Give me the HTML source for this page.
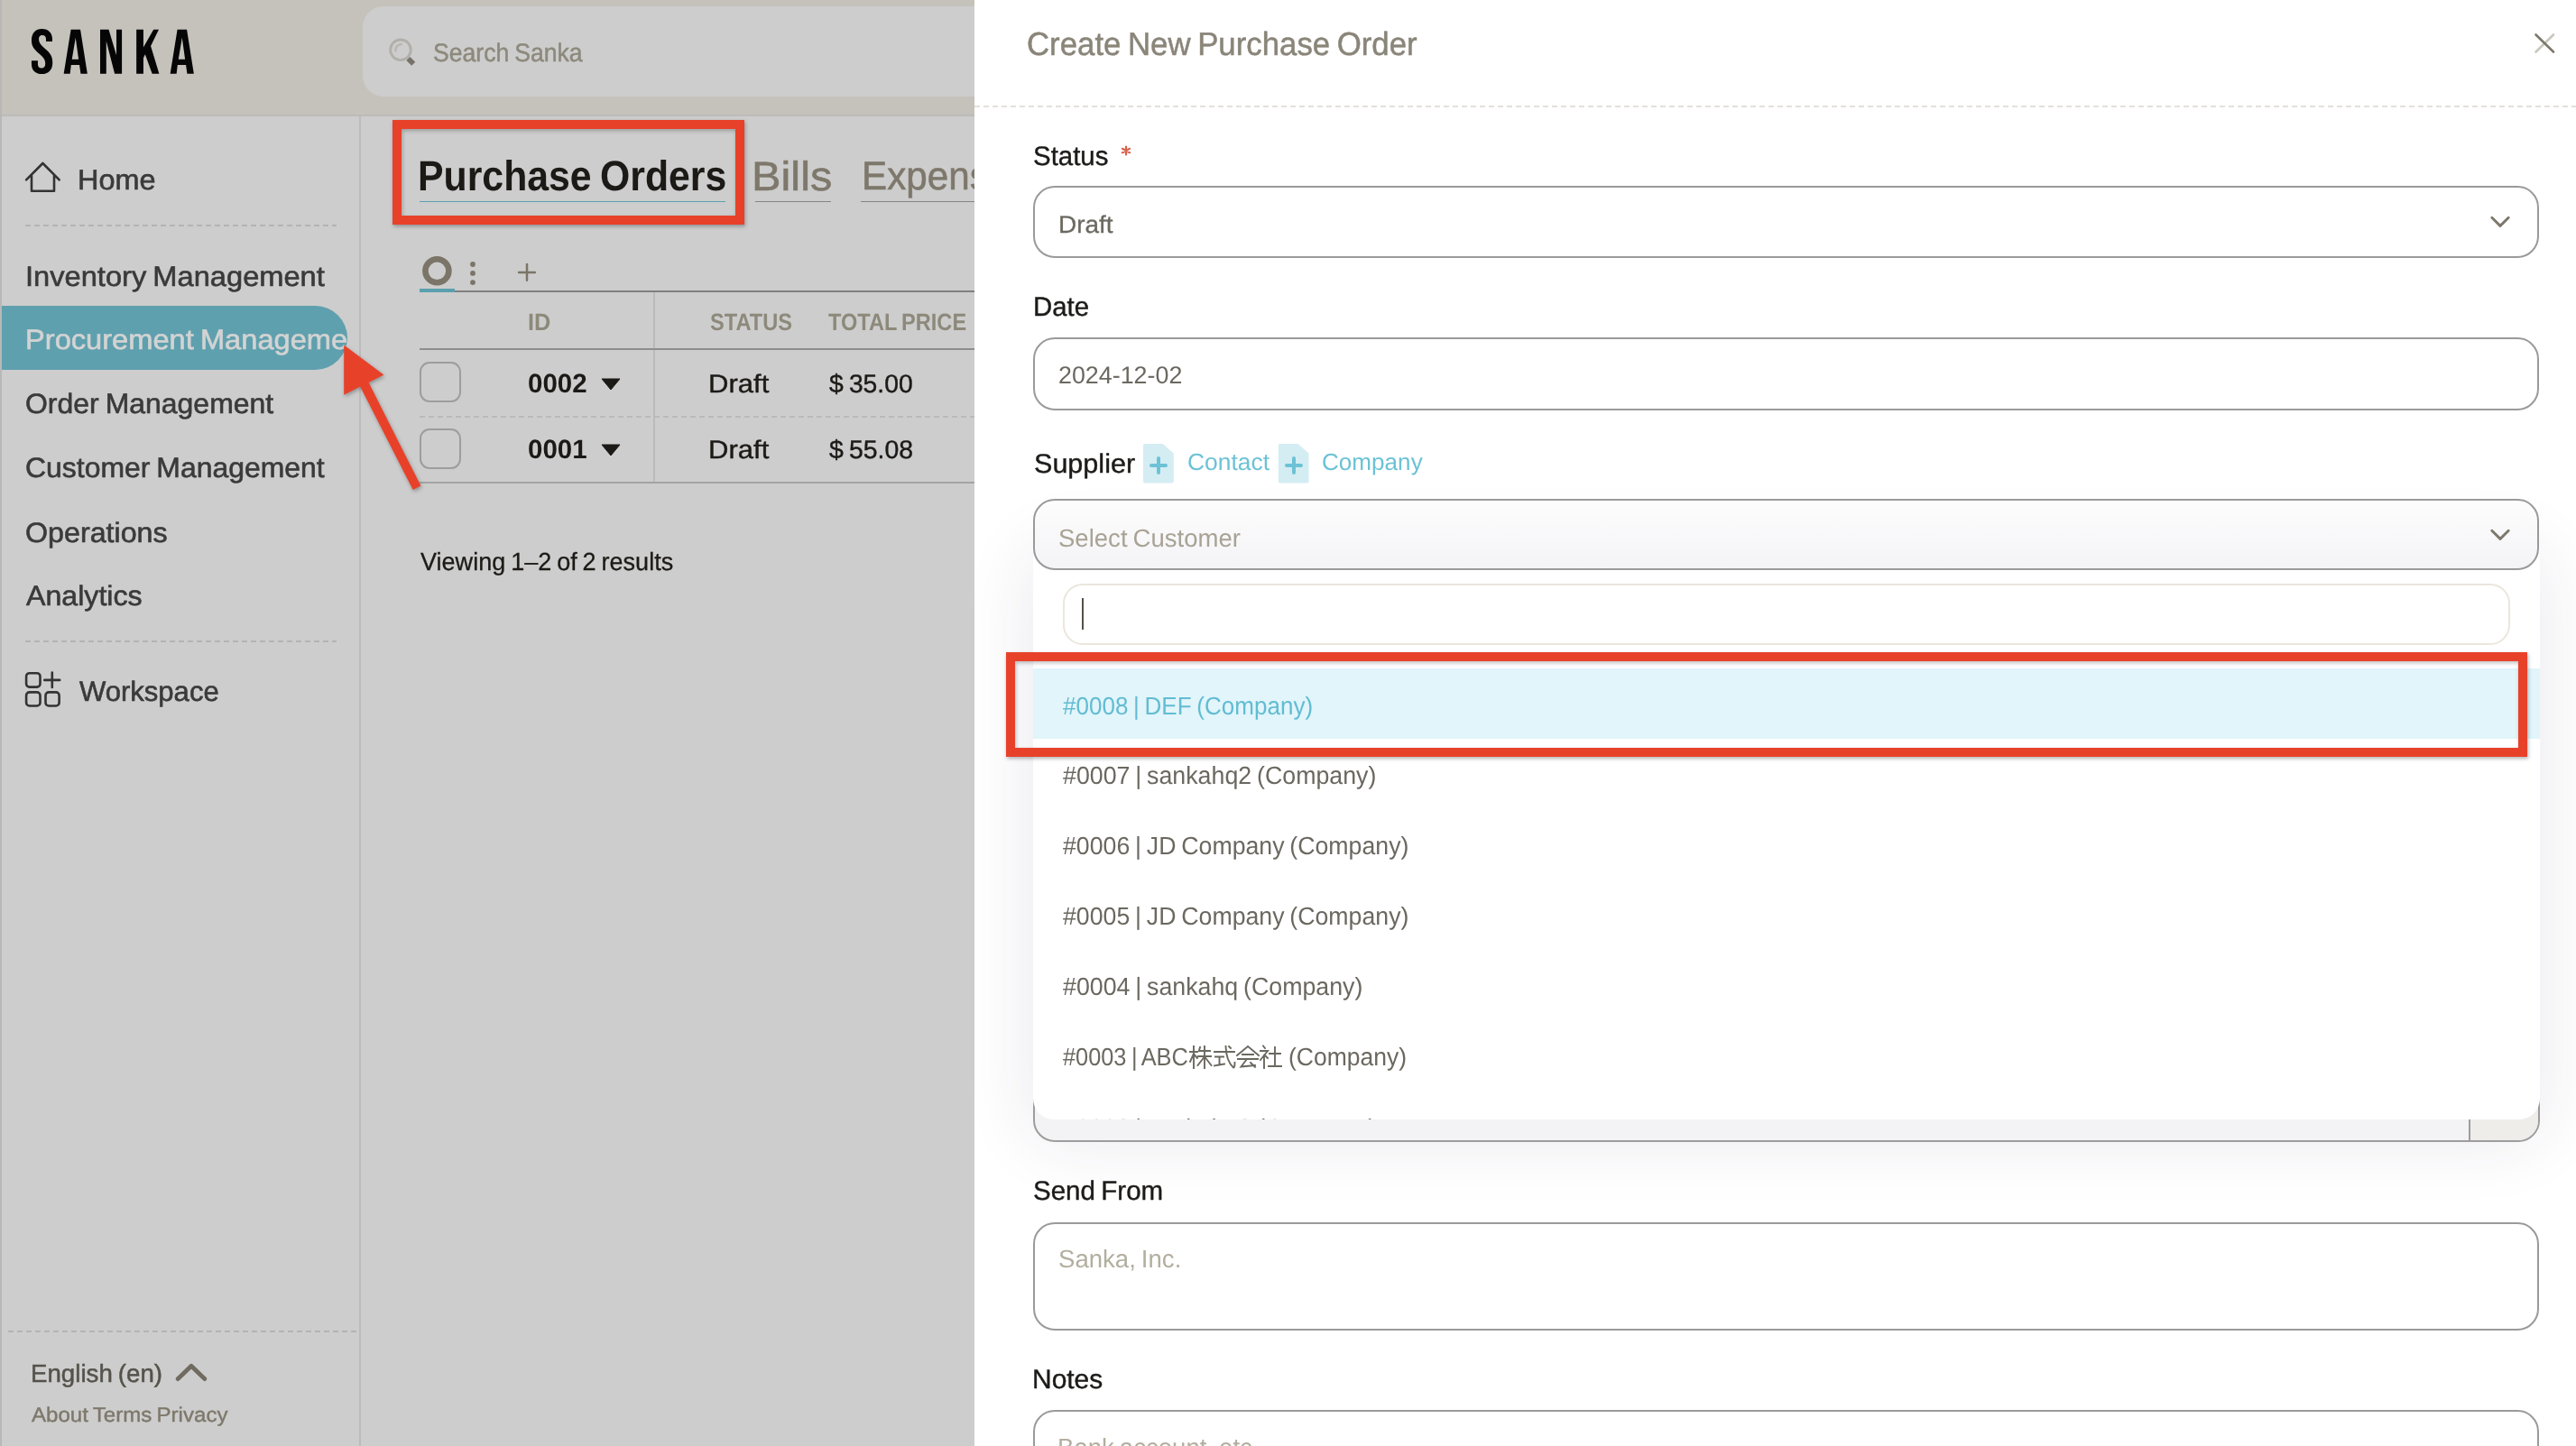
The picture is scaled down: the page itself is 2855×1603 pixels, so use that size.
<!DOCTYPE html>
<html><head><meta charset="utf-8"><title>Sanka - Create New Purchase Order</title>
<style>
html,body{margin:0;padding:0}
body{text-rendering:geometricPrecision;width:2855px;height:1603px;position:relative;overflow:hidden;background:#cdcdcd;font-family:"Liberation Sans",sans-serif}
.a{position:absolute;box-sizing:border-box}
.t{position:absolute;white-space:nowrap;transform-origin:0 0}
.dash{position:absolute;height:2px;background:repeating-linear-gradient(90deg,#b3b3b3 0 6px,transparent 6px 10px)}
</style></head><body>
<!-- ============ LEFT APP (dimmed by modal backdrop) ============ -->
<div class="a" style="left:0;top:0;width:1080px;height:127px;background:#c5c2bb"></div>
<div class="a" style="left:0;top:127px;width:1080px;height:2px;background:#bdbcba"></div>
<div class="a" style="left:0;top:0;width:2px;height:1603px;background:#b8b8b8"></div>
<!-- logo -->
<svg class="a" style="left:25px;top:20px" width="200" height="75" viewBox="0 0 2576 966">
<path fill="#060606" d="M128 320C128 210 190 155 275 155C370 155 425 215 425 300L425 335L335 335L335 300C335 265 315 245 280 245C248 245 232 268 232 300C232 345 255 380 300 420L350 465C410 520 428 570 428 640C428 740 370 800 275 800C180 800 128 740 128 660L128 610L218 610L218 660C218 695 238 715 272 715C305 715 325 695 325 650C325 600 305 570 262 530L210 485C150 430 128 385 128 320Z"/>
<path fill="#060606" fill-rule="evenodd" d="M588 795L690 165L825 165L925 795L830 795L812 670L693 670L678 795ZM705 588L800 588L757 280Z"/>
<path fill="#060606" d="M1108 165L1230 165L1340 530L1340 165L1418 165L1418 795L1315 795L1195 330L1195 795L1108 795Z"/>
<path fill="#060606" d="M1625 165L1725 165L1725 420L1870 165L1945 165L1830 400L1950 795L1850 795L1750 520L1725 570L1725 795L1625 795Z"/>
<path fill="#060606" fill-rule="evenodd" d="M2108 795L2210 165L2345 165L2445 795L2350 795L2332 670L2213 670L2198 795ZM2225 588L2320 588L2277 280Z"/>
</svg>
<!-- search -->
<div class="a" style="left:402px;top:7px;width:760px;height:100px;border-radius:23px;background:#cdcdcd"></div>
<svg class="a" style="left:420px;top:30px" width="60" height="55" viewBox="0 0 60 55">
<circle cx="24" cy="25.3" r="11.3" fill="none" stroke="#b2b0aa" stroke-width="2.9"/>
<path d="M18.4 26.4A6.5 6.5 0 0 1 24.8 19" fill="none" stroke="#b8b6b0" stroke-width="2.6" stroke-linecap="round"/>
<path d="M32.4 35L38.2 40.8" stroke="#77736a" stroke-width="5.8" stroke-linecap="butt"/>
</svg>
<!-- sidebar -->
<div class="a" style="left:398px;top:129px;width:2px;height:1474px;background:#bcbcbc"></div>
<svg class="a" style="left:20px;top:170px" width="60" height="55" viewBox="0 0 60 55">
<path d="M9.1 29.3L27.4 11L45.7 29.3M15 24.4V41.7H40V24.4" fill="none" stroke="#333" stroke-width="2.6" stroke-linecap="round" stroke-linejoin="round"/>
</svg>
<div class="dash" style="left:28px;top:249px;width:345px"></div>
<div class="a" style="left:2px;top:339px;width:383px;height:71px;background:#5fa0ae;border-radius:0 36px 36px 0;overflow:hidden"><span class="t" style="left:26.25px;top:22.33px;font-size:31.147px;line-height:31.147px;font-weight:400;color:#d3d3d3;word-spacing:-1.87px;transform:scaleX(1.0485);-webkit-text-stroke:0.6px #d3d3d3;">Procurement Management</span></div>
<div class="dash" style="left:28px;top:710px;width:345px"></div>
<svg class="a" style="left:20px;top:735px" width="60" height="60" viewBox="0 0 60 60">
<g fill="none" stroke="#333" stroke-width="2.6" stroke-linecap="round">
<rect x="9.1" y="11.2" width="15.4" height="15.4" rx="3.6"/>
<rect x="9.1" y="32.4" width="15.4" height="15.1" rx="3.6"/>
<rect x="30.5" y="32.4" width="15.1" height="15.1" rx="3.6"/>
<path d="M37.8 10.5V27M29.3 18.9H46.2"/>
</g></svg>
<div class="dash" style="left:9px;top:1475px;width:388px"></div>
<svg class="a" style="left:190px;top:1505px" width="45" height="30" viewBox="0 0 45 30">
<path d="M7.2 23.6L22 9.3L36.8 23.6" fill="none" stroke="#6f6b5f" stroke-width="4.8" stroke-linecap="round" stroke-linejoin="round"/>
</svg>
<!-- main -->
<div class="a" style="left:465px;top:222.6px;width:339px;height:1.5px;background:#5ba1b0"></div>
<div class="a" style="left:837px;top:222.6px;width:84px;height:1.5px;background:#848484"></div>
<div class="a" style="left:954px;top:222.6px;width:126px;height:1.5px;background:#848484"></div>
<svg class="a" style="left:455px;top:270px" width="150" height="60" viewBox="0 0 150 60">
<circle cx="29.4" cy="30.3" r="13" fill="none" stroke="#7a7568" stroke-width="6.6"/>
<circle cx="69" cy="23" r="2.9" fill="#7a7568"/><circle cx="69" cy="32.9" r="2.9" fill="#7a7568"/><circle cx="69" cy="43.1" r="2.9" fill="#7a7568"/>
<path d="M129 23V40.8M120.1 31.9H137.9" stroke="#7a7568" stroke-width="2.5" stroke-linecap="round"/>
</svg>
<div class="a" style="left:465px;top:320px;width:39px;height:4px;background:#5ba0ae"></div>
<div class="a" style="left:504px;top:322px;width:576px;height:2px;background:#808080"></div>
<div class="a" style="left:724px;top:324px;width:2px;height:212px;background:#bbbbbb"></div>
<div class="a" style="left:465px;top:386px;width:615px;height:2px;background:#8e8e8e"></div>
<div class="dash" style="left:465px;top:461px;width:615px;background:repeating-linear-gradient(90deg,#bababa 0 6px,transparent 6px 10px)"></div>
<div class="a" style="left:465px;top:534px;width:615px;height:2px;background:#a3a3a3"></div>
<div class="a" style="left:465px;top:401px;width:46px;height:45px;border:2px solid #9d9d9d;border-radius:11px"></div>
<div class="a" style="left:465px;top:475px;width:46px;height:45px;border:2px solid #9d9d9d;border-radius:11px"></div>
<svg class="a" style="left:660px;top:410px" width="40" height="110" viewBox="0 0 40 110">
<path d="M7 10H27L17 22Z M7 83H27L17 95Z" fill="#1c1a16" stroke="#1c1a16" stroke-width="1" stroke-linejoin="round"/>
</svg>
<span class="t" style="left:480.17px;top:45.22px;font-size:28.444px;line-height:28.444px;font-weight:400;color:#8d897c;word-spacing:-1.71px;transform:scaleX(0.9361);-webkit-text-stroke:0.5px #8d897c;">Search Sanka</span>
<span class="t" style="left:86.16px;top:184.39px;font-size:31.431px;line-height:31.431px;font-weight:400;color:#3a3a3a;word-spacing:-1.89px;transform:scaleX(1.0336);-webkit-text-stroke:0.6px #3a3a3a;">Home</span>
<span class="t" style="left:27.85px;top:291.33px;font-size:31.147px;line-height:31.147px;font-weight:400;color:#3a3a3a;word-spacing:-1.87px;transform:scaleX(1.0485);-webkit-text-stroke:0.6px #3a3a3a;">Inventory Management</span>
<span class="t" style="left:28.00px;top:432.33px;font-size:31.147px;line-height:31.147px;font-weight:400;color:#3a3a3a;word-spacing:-1.87px;transform:scaleX(1.0268);-webkit-text-stroke:0.6px #3a3a3a;">Order Management</span>
<span class="t" style="left:28.00px;top:503.33px;font-size:31.147px;line-height:31.147px;font-weight:400;color:#3a3a3a;word-spacing:-1.87px;transform:scaleX(1.0257);-webkit-text-stroke:0.6px #3a3a3a;">Customer Management</span>
<span class="t" style="left:28.29px;top:575.03px;font-size:31.147px;line-height:31.147px;font-weight:400;color:#3a3a3a;word-spacing:-1.87px;transform:scaleX(1.0352);-webkit-text-stroke:0.6px #3a3a3a;">Operations</span>
<span class="t" style="left:29.30px;top:644.73px;font-size:31.147px;line-height:31.147px;font-weight:400;color:#3a3a3a;word-spacing:-1.87px;transform:scaleX(1.0327);-webkit-text-stroke:0.6px #3a3a3a;">Analytics</span>
<span class="t" style="left:87.50px;top:751.03px;font-size:31.147px;line-height:31.147px;font-weight:400;color:#3a3a3a;word-spacing:-1.87px;transform:scaleX(0.9971);-webkit-text-stroke:0.6px #3a3a3a;">Workspace</span>
<span class="t" style="left:33.84px;top:1508.52px;font-size:27.733px;line-height:27.733px;font-weight:400;color:#55524b;word-spacing:-1.66px;transform:scaleX(0.9985);-webkit-text-stroke:0.5px #55524b;">English (en)</span>
<span class="t" style="left:35.00px;top:1556.73px;font-size:22.756px;line-height:22.756px;font-weight:400;color:#7d786b;word-spacing:-1.37px;transform:scaleX(1.0586);-webkit-text-stroke:0.4px #7d786b;">About Terms Privacy</span>
<span class="t" style="left:463.32px;top:171.76px;font-size:46.933px;line-height:46.933px;font-weight:700;color:#1c1a16;word-spacing:-2.82px;transform:scaleX(0.9120);">Purchase Orders</span>
<span class="t" style="left:833.19px;top:172.97px;font-size:45.511px;line-height:45.511px;font-weight:400;color:#7d786b;word-spacing:-2.73px;transform:scaleX(1.0705);-webkit-text-stroke:0.6px #7d786b;">Bills</span>
<span class="t" style="left:954.70px;top:174.17px;font-size:44.089px;line-height:44.089px;font-weight:400;color:#7d786b;word-spacing:-2.65px;transform:scaleX(0.9573);-webkit-text-stroke:0.6px #7d786b;">Expenses</span>
<span class="t" style="left:585.31px;top:344.10px;font-size:26.453px;line-height:26.453px;font-weight:700;color:#8d897b;word-spacing:-1.59px;transform:scaleX(0.9589);">ID</span>
<span class="t" style="left:786.63px;top:344.10px;font-size:26.453px;line-height:26.453px;font-weight:700;color:#8d897b;word-spacing:-1.59px;transform:scaleX(0.8931);">STATUS</span>
<span class="t" style="left:918.00px;top:344.10px;font-size:26.453px;line-height:26.453px;font-weight:700;color:#8d897b;word-spacing:-1.59px;transform:scaleX(0.8915);">TOTAL PRICE</span>
<span class="t" style="left:585.08px;top:411.15px;font-size:29.582px;line-height:29.582px;font-weight:700;color:#1c1a16;word-spacing:-1.77px;transform:scaleX(0.9977);">0002</span>
<span class="t" style="left:784.57px;top:411.92px;font-size:28.444px;line-height:28.444px;font-weight:400;color:#1c1a16;word-spacing:-1.71px;transform:scaleX(1.0922);-webkit-text-stroke:0.4px #1c1a16;">Draft</span>
<span class="t" style="left:919.00px;top:411.92px;font-size:28.444px;line-height:28.444px;font-weight:400;color:#1c1a16;word-spacing:-1.71px;transform:scaleX(0.9947);-webkit-text-stroke:0.4px #1c1a16;">$ 35.00</span>
<span class="t" style="left:585.08px;top:484.15px;font-size:29.582px;line-height:29.582px;font-weight:700;color:#1c1a16;word-spacing:-1.77px;transform:scaleX(0.9977);">0001</span>
<span class="t" style="left:784.57px;top:484.92px;font-size:28.444px;line-height:28.444px;font-weight:400;color:#1c1a16;word-spacing:-1.71px;transform:scaleX(1.0922);-webkit-text-stroke:0.4px #1c1a16;">Draft</span>
<span class="t" style="left:919.00px;top:484.92px;font-size:28.444px;line-height:28.444px;font-weight:400;color:#1c1a16;word-spacing:-1.71px;transform:scaleX(0.9995);-webkit-text-stroke:0.4px #1c1a16;">$ 55.08</span>
<span class="t" style="left:465.50px;top:608.52px;font-size:27.733px;line-height:27.733px;font-weight:400;color:#1c1a16;word-spacing:-1.66px;transform:scaleX(0.9758);-webkit-text-stroke:0.3px #1c1a16;">Viewing 1–2 of 2 results</span>
<!-- ============ MODAL ============ -->
<div class="a" style="left:1080px;top:0;width:1775px;height:1603px;background:#fff"></div>
<div class="a" style="left:1080px;top:117px;width:1775px;height:2px;background:repeating-linear-gradient(90deg,#e3e0d8 0 6px,transparent 6px 10px)"></div>
<svg class="a" style="left:2800px;top:30px" width="40" height="40" viewBox="0 0 40 40">
<path d="M30 8.5L10.5 27.5" stroke="#cac7be" stroke-width="2.6" stroke-linecap="round"/>
<path d="M10.5 8.5L30 27.5" stroke="#7d786b" stroke-width="2.6" stroke-linecap="round"/>
</svg>
<svg class="a" style="left:1236px;top:155px" width="24" height="24" viewBox="0 0 24 24">
<path d="M12 7.5V16.5M7.9 9.8L16.1 14.2M16.1 9.8L7.9 14.2" stroke="#d9624a" stroke-width="2.2" stroke-linecap="round"/>
</svg>
<!-- status select -->
<div class="a" style="left:1145px;top:206px;width:1669px;height:80px;border:2px solid #9a9a9a;border-radius:24px"></div>
<svg class="a" style="left:2750px;top:230px" width="40" height="30" viewBox="0 0 40 30">
<path d="M11.8 11.2L21 20.4L30.2 11.2" fill="none" stroke="#7d786b" stroke-width="2.9" stroke-linecap="round" stroke-linejoin="round"/>
</svg>
<!-- date -->
<div class="a" style="left:1145px;top:374px;width:1669px;height:81px;border:2px solid #9a9a9a;border-radius:24px"></div>
<!-- supplier badges -->
<svg class="a" style="left:1260px;top:485px" width="200" height="60" viewBox="0 0 200 60">
<path d="M7 9Q7 7 9 7L28.7 7L40.8 17.5L40.8 48.5Q40.8 50.5 38.8 50.5L9 50.5Q7 50.5 7 48.5Z" fill="#d4edf3"/>
<path d="M156.8 9Q156.8 7 158.8 7L178.5 7L190.6 17.5L190.6 48.5Q190.6 50.5 188.6 50.5L158.8 50.5Q156.8 50.5 156.8 48.5Z" fill="#d4edf3"/>
<path d="M24 23V39M16 31H32M174 23V39M166 31H182" stroke="#6dc2d6" stroke-width="4" stroke-linecap="round"/>
</svg>
<!-- dropdown shadow + supplier select + panel -->
<div class="a" style="left:1145px;top:590px;width:1670px;height:651px;border-radius:24px;box-shadow:0 20px 80px rgba(50,40,80,0.11)"></div>
<!-- hidden field under dropdown -->
<div class="a" style="left:1145px;top:1180px;width:1670px;height:86px;border:2px solid #9d9d9d;border-radius:24px;background:#f3f3f5"></div>
<div class="a" style="left:2736px;top:1182px;width:77px;height:82px;border-left:2px solid #9d9d9d;border-radius:0 22px 22px 0;background:#efedea"></div>
<div class="a" style="left:1145px;top:553px;width:1669px;height:79px;border:2px solid #9a9a9a;border-radius:24px;background:linear-gradient(#fdfdfd,#f4f3f6)"></div>
<svg class="a" style="left:2750px;top:578px" width="40" height="30" viewBox="0 0 40 30">
<path d="M11.8 10.2L21 19.4L30.2 10.2" fill="none" stroke="#7d786b" stroke-width="2.9" stroke-linecap="round" stroke-linejoin="round"/>
</svg>
<div class="a" style="left:1145px;top:633px;width:1670px;height:608px;background:#fff;border-radius:0 0 23px 23px;overflow:hidden">
  <div class="a" style="left:33px;top:14px;width:1604px;height:68px;border:2px solid #ebe6dd;border-radius:22px"></div>
  <div class="a" style="left:54px;top:30px;width:2px;height:35px;background:#555148"></div>
  <div class="a" style="left:0;top:108px;width:1670px;height:78px;background:#e1f5fa"></div>
  <span class="t" style="left:32.80px;top:135.52px;font-size:27.733px;line-height:27.733px;font-weight:400;color:#62bcd3;word-spacing:-1.66px;transform:scaleX(0.9396);">#0008 | DEF (Company)</span>
<span class="t" style="left:32.80px;top:213.32px;font-size:27.733px;line-height:27.733px;font-weight:400;color:#6b6860;word-spacing:-1.66px;transform:scaleX(0.9658);">#0007 | sankahq2 (Company)</span>
<span class="t" style="left:32.80px;top:291.12px;font-size:27.733px;line-height:27.733px;font-weight:400;color:#6b6860;word-spacing:-1.66px;transform:scaleX(0.9632);">#0006 | JD Company (Company)</span>
<span class="t" style="left:32.80px;top:368.92px;font-size:27.733px;line-height:27.733px;font-weight:400;color:#6b6860;word-spacing:-1.66px;transform:scaleX(0.9632);">#0005 | JD Company (Company)</span>
<span class="t" style="left:32.80px;top:446.52px;font-size:27.733px;line-height:27.733px;font-weight:400;color:#6b6860;word-spacing:-1.66px;transform:scaleX(0.9655);">#0004 | sankahq (Company)</span>
<span class="t" style="left:32.80px;top:525.22px;font-size:27.733px;line-height:27.733px;font-weight:400;color:#6b6860;word-spacing:-1.66px;transform:scaleX(0.9136);">#0003 | ABC</span>
<span class="t" style="left:283.36px;top:525.22px;font-size:27.733px;line-height:27.733px;font-weight:400;color:#6b6860;word-spacing:-1.66px;transform:scaleX(0.9559);">(Company)</span>
<span class="t" style="left:32.80px;top:603.82px;font-size:27.733px;line-height:27.733px;font-weight:400;color:#6b6860;word-spacing:-1.66px;transform:scaleX(0.9658);">#0002 | sankahq3 (Company)</span>
  <svg class="a" style="left:173px;top:525px" width="104" height="30" viewBox="0 0 104 30">
  <g fill="none" stroke="#6b6860" stroke-width="1.9" stroke-linecap="square">
   <path d="M1 8H9M5 2V26M5 10L1 19M5.5 11L9 15M12 3L11 6.5M11 7H23M10 13H24M17 2V26M16.5 14L9.5 23M17.5 14L24.5 23"/>
   <path d="M28 8H50M44 2L46 4M29 13.5H38M33.5 13.5V22M28 23.5L39 21.5M40.5 2Q41 18 49 25.5Q50.5 26 50.5 20"/>
   <path d="M65 2L53 12M65 2L77 12M59 11H71M54 16H76M64 16L57.5 24.5L73 23M68 20L73 25"/>
   <path d="M82 1.5L84 4M79 7H87L79 17M83 12V26M84 12L87 15M89 10H101M95 3V24M88 24H102"/>
  </g></svg>
</div>
<!-- send from -->
<div class="a" style="left:1145px;top:1355px;width:1669px;height:120px;border:2px solid #9a9a9a;border-radius:24px"></div>
<div class="a" style="left:1145px;top:1563px;width:1669px;height:120px;border:2px solid #9a9a9a;border-radius:24px"></div>
<span class="t" style="left:1138.37px;top:30.81px;font-size:36.124px;line-height:36.124px;font-weight:400;color:#8a8579;word-spacing:-2.17px;transform:scaleX(0.9634);-webkit-text-stroke:0.5px #8a8579;">Create New Purchase Order</span>
<span class="t" style="left:1145.48px;top:158.71px;font-size:29.867px;line-height:29.867px;font-weight:400;color:#1c1b19;word-spacing:-1.79px;transform:scaleX(0.9855);-webkit-text-stroke:0.4px #1c1b19;">Status</span>
<span class="t" style="left:1173.32px;top:236.12px;font-size:27.022px;line-height:27.022px;font-weight:400;color:#6b6860;word-spacing:-1.62px;transform:scaleX(1.0347);-webkit-text-stroke:0.3px #6b6860;">Draft</span>
<span class="t" style="left:1144.50px;top:326.11px;font-size:29.867px;line-height:29.867px;font-weight:400;color:#1c1b19;word-spacing:-1.79px;transform:scaleX(0.9842);-webkit-text-stroke:0.4px #1c1b19;">Date</span>
<span class="t" style="left:1172.74px;top:403.12px;font-size:27.022px;line-height:27.022px;font-weight:400;color:#6b6860;word-spacing:-1.62px;transform:scaleX(0.9937);">2024-12-02</span>
<span class="t" style="left:1145.85px;top:499.71px;font-size:29.867px;line-height:29.867px;font-weight:400;color:#1c1b19;word-spacing:-1.79px;transform:scaleX(1.0231);-webkit-text-stroke:0.4px #1c1b19;">Supplier</span>
<span class="t" style="left:1315.76px;top:498.74px;font-size:26.169px;line-height:26.169px;font-weight:400;color:#6cc2d6;word-spacing:-1.57px;transform:scaleX(1.0107);">Contact</span>
<span class="t" style="left:1465.28px;top:498.74px;font-size:26.169px;line-height:26.169px;font-weight:400;color:#6cc2d6;word-spacing:-1.57px;transform:scaleX(0.9976);">Company</span>
<span class="t" style="left:1173.14px;top:583.32px;font-size:27.733px;line-height:27.733px;font-weight:400;color:#a8a395;word-spacing:-1.66px;transform:scaleX(0.9935);">Select Customer</span>
<span class="t" style="left:1145.08px;top:1305.71px;font-size:29.867px;line-height:29.867px;font-weight:400;color:#1c1b19;word-spacing:-1.79px;transform:scaleX(0.9878);-webkit-text-stroke:0.4px #1c1b19;">Send From</span>
<span class="t" style="left:1173.14px;top:1382.42px;font-size:27.733px;line-height:27.733px;font-weight:400;color:#b3ae9f;word-spacing:-1.66px;transform:scaleX(0.9947);">Sanka, Inc.</span>
<span class="t" style="left:1143.66px;top:1514.71px;font-size:29.867px;line-height:29.867px;font-weight:400;color:#1c1b19;word-spacing:-1.79px;transform:scaleX(1.0033);-webkit-text-stroke:0.4px #1c1b19;">Notes</span>
<span class="t" style="left:1171.84px;top:1591.02px;font-size:27.733px;line-height:27.733px;font-weight:400;color:#b3ae9f;word-spacing:-1.66px;transform:scaleX(0.9947);">Bank account, etc.</span>
<!-- ============ ANNOTATIONS ============ -->
<div class="a" style="left:435px;top:133px;width:390px;height:116px;border:10px solid #e8412a;box-shadow:1px 2px 4px rgba(0,0,0,0.3), inset 1px 2px 4px rgba(0,0,0,0.25)"></div>
<div class="a" style="left:1115px;top:723px;width:1686px;height:116px;border:10px solid #e8412a;box-shadow:1px 2px 4px rgba(0,0,0,0.3), inset 1px 2px 4px rgba(0,0,0,0.25)"></div>
<svg class="a" style="left:370px;top:370px;filter:drop-shadow(1px 2px 2px rgba(0,0,0,0.3))" width="110" height="180" viewBox="370 370 110 180">
<path d="M381.2 382.4L425.4 415.4L408.6 424.1L466.4 538.6L457.7 543L399.2 428.5L381.2 437.8Z" fill="#e8412a"/>
</svg>
</body></html>
